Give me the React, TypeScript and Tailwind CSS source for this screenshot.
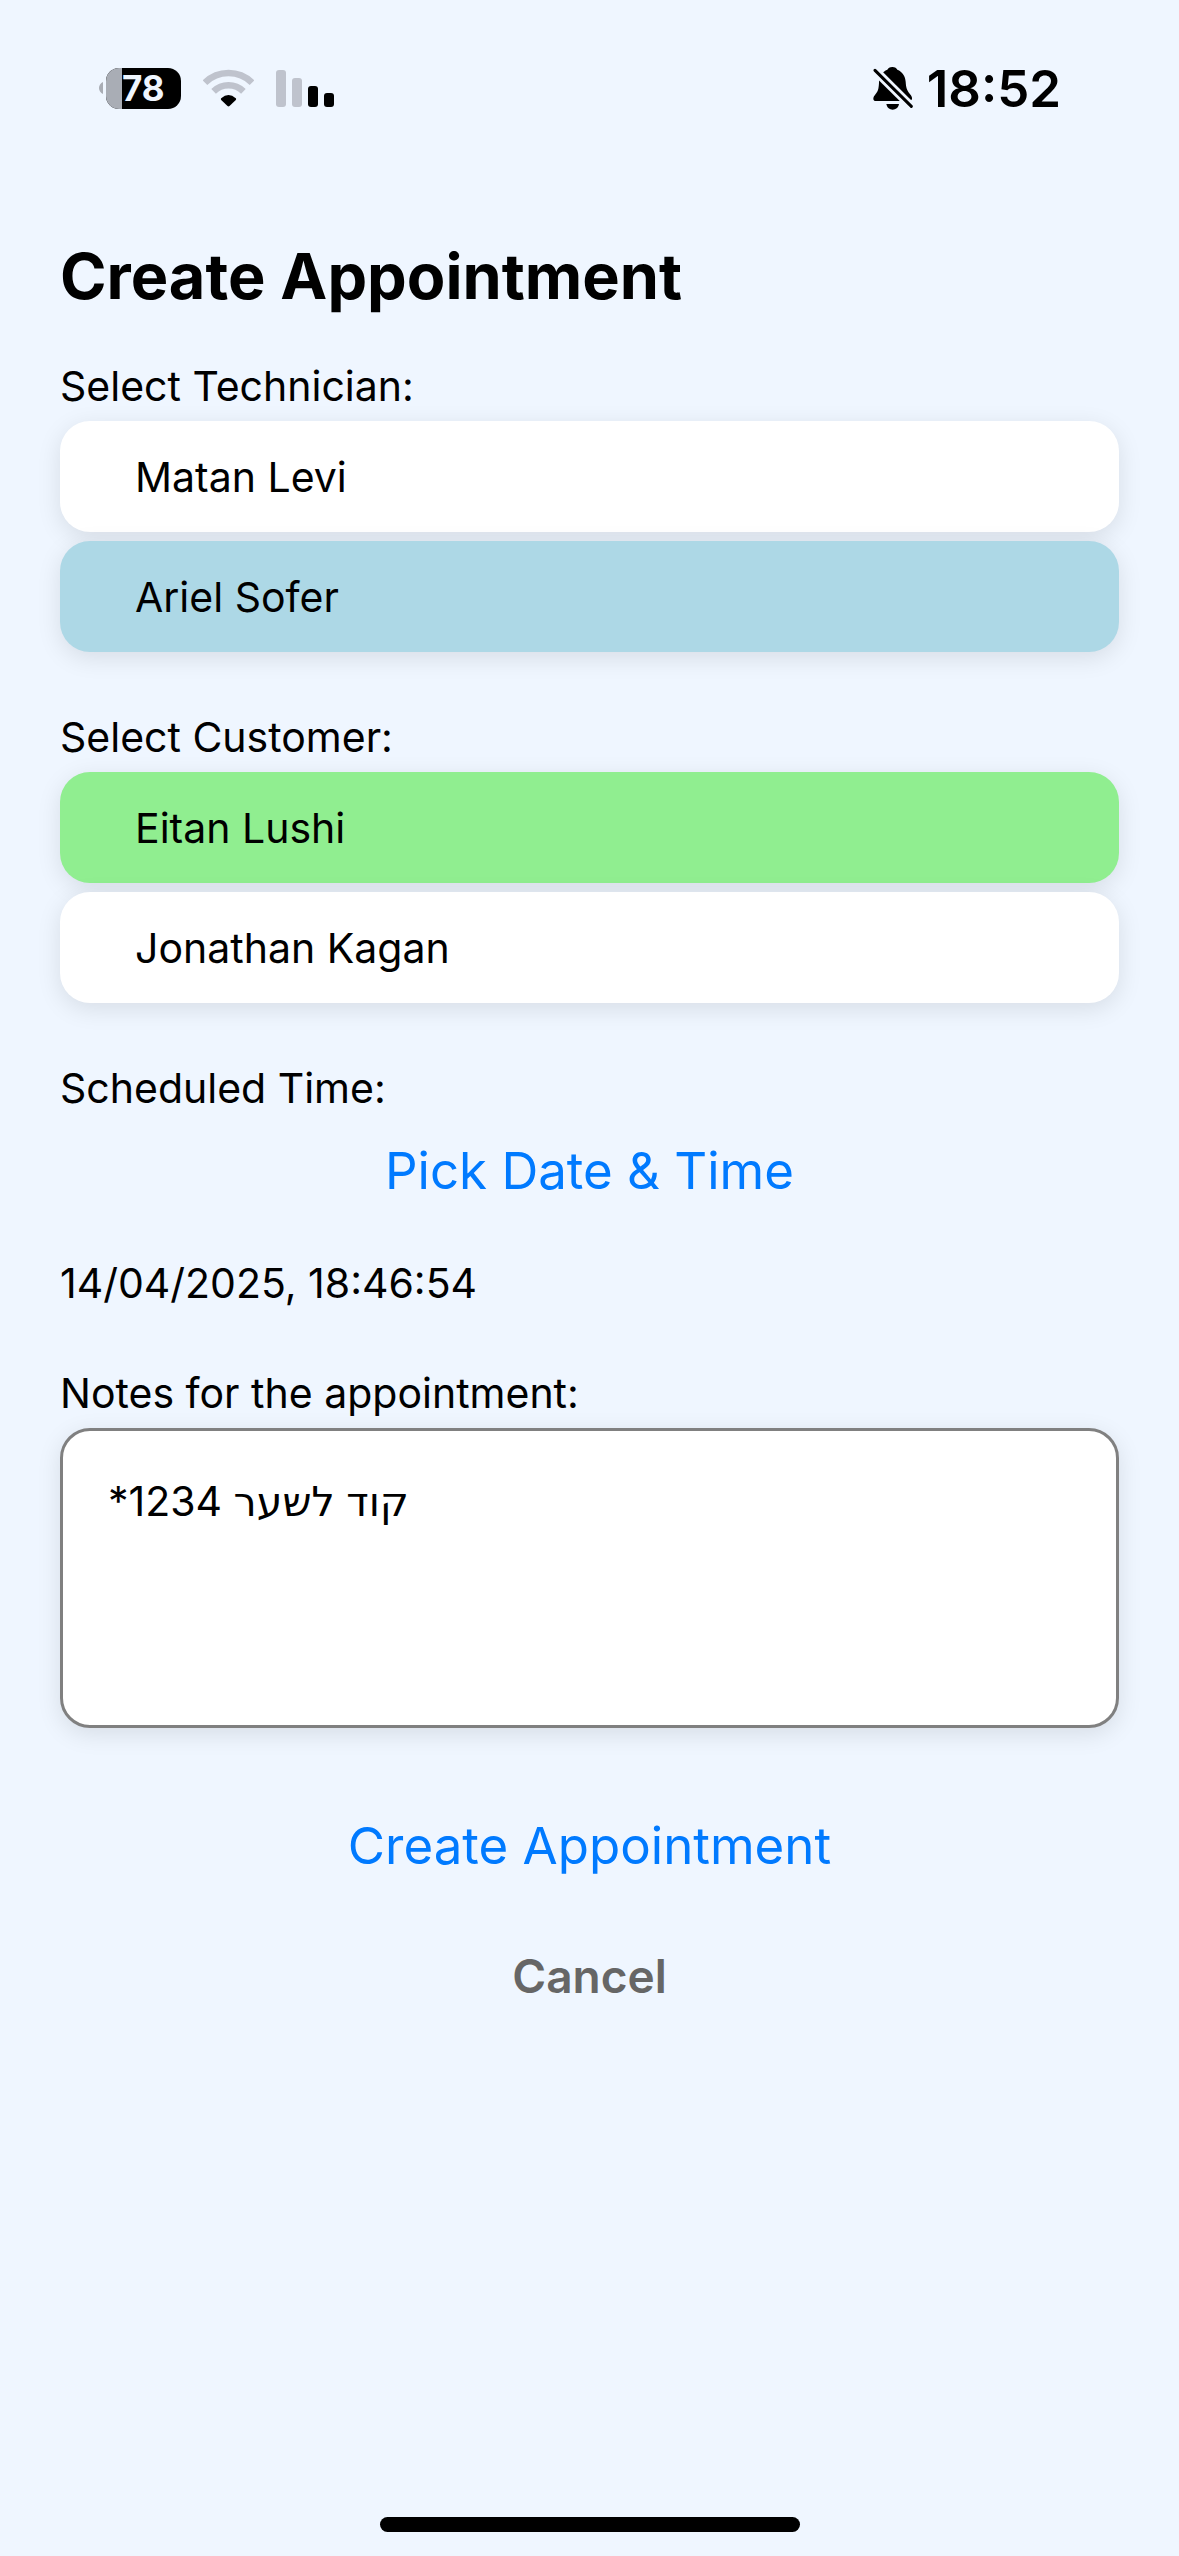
import { useState } from "react";

const technicians = ["Matan Levi", "Ariel Sofer"];
const customers = ["Eitan Lushi", "Jonathan Kagan"];

function Battery() {
  return (
    <div className="flex items-center gap-[3px]" aria-label="Battery 78%">
      <svg width="4" height="12" viewBox="0 0 4 12" aria-hidden="true">
        <path d="M4 0C1.500 1 0 3.500 0 6s1.500 5 4 6z" fill="#a9adb5" />
      </svg>
      <div className="flex h-[41px] w-[75px] items-center overflow-hidden rounded-[13px] bg-black">
        <div className="h-full w-4 bg-[#a9adb5]" />
        <span className="text-[35px] leading-none font-bold text-[#eff6ff]">78</span>
      </div>
    </div>
  );
}

function Wifi() {
  return (
    <svg width="51" height="38" viewBox="0 0 51 38" aria-hidden="true">
      <g fill="none" stroke="#bfc3cd" strokeWidth="6.600">
        <path d="M2 13.700A33.500 33.500 0 0 1 49 13.700" />
        <path d="M10.600 22.300A21.300 21.300 0 0 1 40.400 22.300" />
      </g>
      <path
        d="M18.200 29.300Q25.500 22.600 32.800 29.300Q33.600 30.100 32.800 30.900L26.500 37Q25.500 37.900 24.500 37L18.200 30.900Q17.400 30.100 18.200 29.300z"
        fill="#000"
      />
    </svg>
  );
}

function Signal() {
  return (
    <svg width="58" height="37" viewBox="0 0 58 37" aria-hidden="true">
      <rect x="0" y="0" width="10" height="37" rx="3" fill="#bfc3cd" />
      <rect x="16" y="8" width="10" height="29" rx="3" fill="#bfc3cd" />
      <rect x="32" y="16" width="10" height="21" rx="3" fill="#000" />
      <rect x="48" y="23" width="10" height="14" rx="3" fill="#000" />
    </svg>
  );
}

function BellOff() {
  return (
    <svg width="40" height="43" viewBox="0 0 120 129" aria-hidden="true">
      <path
        d="M58 0C66 0 71 4 73 8C88 14 97 27 98 44C99 62 102 70 110 80C116 87 118 91 117 96C116 100 112 102 108 102H9C4 102 1 99 1 95C1 91 3 87 8 81C15 73 17 66 18 48C18 28 28 14 43 8C45 4 50 0 58 0z"
        fill="#000"
      />
      <path d="M-4 0L122 125" stroke="#eff6ff" strokeWidth="26" />
      <path d="M6 10L115 118" stroke="#000" strokeWidth="9" strokeLinecap="round" />
      <path d="M40 111H78C76 122 68 128 59 128S42 122 40 111z" fill="#000" />
    </svg>
  );
}

type OptionListProps = {
  label: string;
  options: string[];
  selected: string;
  selectedClass: string;
  onSelect: (name: string) => void;
};

function OptionList({ label, options, selected, selectedClass, onSelect }: OptionListProps) {
  return (
    <section aria-label={label} className="mb-[60px]">
      <h2 className="mb-2.5 text-[41px] leading-[50px]">{label}</h2>
      <div className="flex flex-col gap-[9px]">
        {options.map((name) => (
          <button
            key={name}
            type="button"
            aria-pressed={name === selected}
            onClick={() => onSelect(name)}
            className={`h-[111px] w-full rounded-[30px] px-[75px] text-left text-[41px] leading-[50px] shadow-[0_6px_24px_rgba(0,0,0,0.1)] ${
              name === selected ? selectedClass : "bg-white"
            }`}
          >
            {name}
          </button>
        ))}
      </div>
    </section>
  );
}

export default function App() {
  const [technician, setTechnician] = useState("Ariel Sofer");
  const [customer, setCustomer] = useState("Eitan Lushi");
  const [notes, setNotes] = useState("קוד לשער 1234*");

  return (
    <div className="flex min-h-screen flex-col bg-[#eff6ff] font-['Inter','DejaVu_Sans',sans-serif] text-black">
      <header className="flex h-44 items-center justify-between pr-[118px] pl-[99px]">
        <div className="flex items-center gap-[22px]">
          <Battery />
          <Wifi />
          <Signal />
        </div>
        <div className="flex items-center gap-3.5">
          <BellOff />
          <span className="text-[51px] leading-none font-semibold">18:52</span>
        </div>
      </header>

      <main className="flex flex-1 flex-col px-[60px] pt-[60px]">
        <h1 className="mb-[45px] text-[63px] leading-[80px] font-bold">Create Appointment</h1>

        <OptionList
          label="Select Technician:"
          options={technicians}
          selected={technician}
          selectedClass="bg-[#add8e6]"
          onSelect={setTechnician}
        />
        <OptionList
          label="Select Customer:"
          options={customers}
          selected={customer}
          selectedClass="bg-[#90ee90]"
          onSelect={setCustomer}
        />

        <h2 className="text-[41px] leading-[50px]">Scheduled Time:</h2>
        <button type="button" className="h-[115px] text-[51px] leading-[66px] text-[#007aff]">
          Pick Date &amp; Time
        </button>
        <p className="mt-[30px] text-[41px] leading-[50px]">14/04/2025, 18:46:54</p>

        <label htmlFor="notes" className="mt-[60px] mb-2.5 text-[41px] leading-[50px]">
          Notes for the appointment:
        </label>
        <textarea
          id="notes"
          dir="rtl"
          value={notes}
          onChange={(e) => setNotes(e.target.value)}
          className="h-[300px] w-full resize-none rounded-[30px] border-[3px] border-[#808080] bg-white p-[45px] text-left text-[41px] leading-[50px] shadow-[0_6px_24px_rgba(0,0,0,0.1)] outline-none"
        />

        <button type="button" className="mt-[60px] h-[115px] text-[51px] leading-[66px] text-[#007aff]">
          Create Appointment
        </button>
        <button type="button" className="mt-11 self-center text-[46px] leading-[58px] font-semibold text-[#666666]">
          Cancel
        </button>
      </main>

      <footer className="flex justify-center pb-6">
        <div className="h-[15px] w-[420px] rounded-full bg-black" />
      </footer>
    </div>
  );
}
